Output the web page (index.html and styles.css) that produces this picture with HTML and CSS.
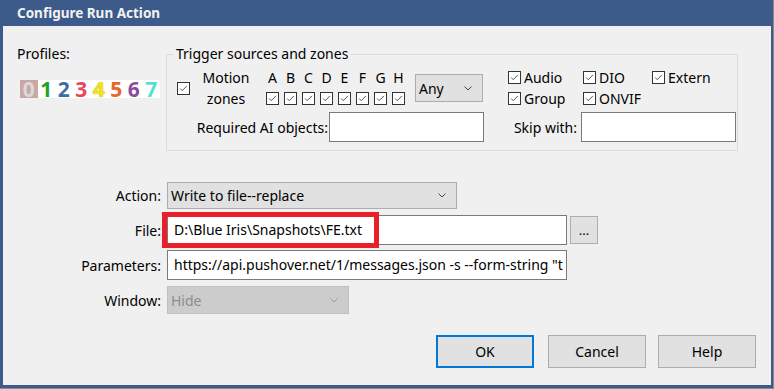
FILE: index.html
```html
<!DOCTYPE html>
<html lang="en">
<head>
    <meta charset="UTF-8">
    <title>Configure Run Action</title>
    <link rel="stylesheet" href="styles.css">
</head>
<body>
    <div class="window">
        <div class="titlebar">Configure Run Action</div>
        <div class="client">
            <div class="top">
                <div class="profiles">
                    <div class="profiles-label">Profiles:</div>
                    <div class="profile-strip">
                        <span class="p p0">0</span>
                        <span class="p p1">1</span>
                        <span class="p p2">2</span>
                        <span class="p p3">3</span>
                        <span class="p p4">4</span>
                        <span class="p p5">5</span>
                        <span class="p p6">6</span>
                        <span class="p p7">7</span>
                    </div>
                </div>

                <fieldset class="triggers">
                    <legend>Trigger sources and zones</legend>
                    <div class="trig-row">
                        <span class="cb"><svg viewBox="0 0 13 13"><polyline points="2.5,6.5 5,9 10.5,3.5"/></svg></span>
                        <div class="motion-label">Motion<br>zones</div>
                        <div class="zones">
                            <span class="zl">A</span><span class="zl">B</span><span class="zl">C</span><span class="zl">D</span>
                            <span class="zl">E</span><span class="zl">F</span><span class="zl">G</span><span class="zl">H</span>
                            <span class="cb"><svg viewBox="0 0 13 13"><polyline points="2.5,6.5 5,9 10.5,3.5"/></svg></span>
                            <span class="cb"><svg viewBox="0 0 13 13"><polyline points="2.5,6.5 5,9 10.5,3.5"/></svg></span>
                            <span class="cb"><svg viewBox="0 0 13 13"><polyline points="2.5,6.5 5,9 10.5,3.5"/></svg></span>
                            <span class="cb"><svg viewBox="0 0 13 13"><polyline points="2.5,6.5 5,9 10.5,3.5"/></svg></span>
                            <span class="cb"><svg viewBox="0 0 13 13"><polyline points="2.5,6.5 5,9 10.5,3.5"/></svg></span>
                            <span class="cb"><svg viewBox="0 0 13 13"><polyline points="2.5,6.5 5,9 10.5,3.5"/></svg></span>
                            <span class="cb"><svg viewBox="0 0 13 13"><polyline points="2.5,6.5 5,9 10.5,3.5"/></svg></span>
                            <span class="cb"><svg viewBox="0 0 13 13"><polyline points="2.5,6.5 5,9 10.5,3.5"/></svg></span>
                        </div>
                        <div class="select any">
                            <span>Any</span>
                            <svg class="chev" viewBox="0 0 8 5"><polyline points="0.5,0.5 4,4 7.5,0.5"/></svg>
                        </div>
                        <div class="sources">
                            <div class="src"><span class="cb"><svg viewBox="0 0 13 13"><polyline points="2.5,6.5 5,9 10.5,3.5"/></svg></span>Audio</div>
                            <div class="src"><span class="cb"><svg viewBox="0 0 13 13"><polyline points="2.5,6.5 5,9 10.5,3.5"/></svg></span>DIO</div>
                            <div class="src"><span class="cb"><svg viewBox="0 0 13 13"><polyline points="2.5,6.5 5,9 10.5,3.5"/></svg></span>Extern</div>
                            <div class="src"><span class="cb"><svg viewBox="0 0 13 13"><polyline points="2.5,6.5 5,9 10.5,3.5"/></svg></span>Group</div>
                            <div class="src"><span class="cb"><svg viewBox="0 0 13 13"><polyline points="2.5,6.5 5,9 10.5,3.5"/></svg></span>ONVIF</div>
                        </div>
                    </div>
                    <div class="trig-row2">
                        <label class="lbl ai-lbl">Required AI objects:</label>
                        <div class="input"></div>
                        <label class="lbl skip-lbl">Skip with:</label>
                        <div class="input"></div>
                    </div>
                </fieldset>
            </div>

            <div class="form">
                <label class="lbl">Action:</label>
                <div class="select action">
                    <span>Write to file--replace</span>
                    <svg class="chev" viewBox="0 0 8 5"><polyline points="0.5,0.5 4,4 7.5,0.5"/></svg>
                </div>

                <label class="lbl">File:</label>
                <div class="file-row">
                    <div class="file-wrap">
                        <div class="input wide">D:\Blue Iris\Snapshots\FE.txt</div>
                        <div class="highlight"></div>
                    </div>
                    <div class="btn browse">...</div>
                </div>

                <label class="lbl">Parameters:</label>
                <div class="input wide">https://api.pushover.net/1/messages.json -s --form-string "t</div>

                <label class="lbl">Window:</label>
                <div class="select window-sel disabled">
                    <span>Hide</span>
                    <svg class="chev" viewBox="0 0 8 5"><polyline points="0.5,0.5 4,4 7.5,0.5"/></svg>
                </div>
            </div>

            <div class="buttons">
                <div class="btn ok">OK</div>
                <div class="btn cancel">Cancel</div>
                <div class="btn help">Help</div>
            </div>
        </div>
    </div>
</body>
</html>
```

FILE: styles.css
```css
body {
    margin: 0;
    background: #8a8a8a;
    font-family: "Noto Sans", "Open Sans", sans-serif;
    font-size: 14px;
    color: #000;
}
.window {
    width: 773px;
    height: 388px;
    box-sizing: border-box;
    border: 3px solid #3c5a8a;
    border-top: 0;
    border-right-width: 2px;
    background: #f0f0f0;
    display: flex;
    flex-direction: column;
}
.titlebar {
    height: 26px;
    line-height: 26px;
    background: #3c5a8a;
    color: #f2f2f2;
    font-weight: bold;
    font-size: 13.5px;
    padding-left: 14px;
}
.client {
    flex: 1;
    padding: 0 15px 0 14px;
}

/* top area */
.top {
    display: flex;
    margin-top: 18px;
}
.profiles {
    width: 149px;
    flex: none;
}
.profiles-label {
    line-height: 20px;
}
.profile-strip {
    display: flex;
    margin: 16px 0 0 3px;
    width: 140px;
    height: 18px;
    background: #fff;
}
.p {
    width: 17.5px;
    text-align: center;
    font-weight: bold;
    font-size: 21px;
    line-height: 18px;
}
.p0 { background: #c9a7a7; color: #d9d9d9; }
.p1 { color: #27a027; }
.p2 { color: #3d6da6; }
.p3 { color: #e6495d; }
.p4 { color: #f3e41e; text-shadow: 0 0 1px #9a8d00; }
.p5 { color: #e8672a; }
.p6 { color: #8c4b9e; }
.p7 { color: #4fe1d5; }

.triggers {
    margin: 0;
    padding: 4px 1px 8px 10px;
    width: 572px;
    box-sizing: border-box;
    border: 1px solid #dcdcdc;
    min-width: 0;
}
.triggers legend {
    padding: 0 3px;
    margin-left: -4px;
    line-height: 20px;
}

/* checkbox */
.cb {
    width: 13px;
    height: 13px;
    box-sizing: border-box;
    border: 1px solid #333;
    background: #fff;
    flex: none;
    display: block;
}
.cb svg {
    display: block;
    width: 11px;
    height: 11px;
    fill: none;
    stroke: #333;
    stroke-width: 1;
}

.trig-row {
    display: flex;
    align-items: center;
    height: 40px;
}
.motion-label {
    margin-left: 11px;
    width: 50px;
    text-align: center;
    line-height: 21px;
}
.zones {
    margin-left: 15px;
    display: grid;
    grid-template-columns: repeat(8, 13px);
    grid-template-rows: 20px 13px;
    column-gap: 5px;
    row-gap: 4px;
    align-self: flex-start;
}
.zl {
    text-align: center;
    line-height: 20px;
}
.select {
    display: flex;
    align-items: center;
    justify-content: space-between;
    box-sizing: border-box;
    background: #e1e1e1;
    border: 1px solid #adadad;
    padding: 0 10px 0 3px;
}
.chev {
    width: 8px;
    height: 5px;
    fill: none;
    stroke: #444;
    stroke-width: 1;
}
.any {
    margin-left: 10px;
    width: 68px;
    height: 28px;
}
.sources {
    margin-left: 25px;
    display: grid;
    grid-template-columns: 75px 69px auto;
    grid-auto-rows: 21px;
    align-self: flex-start;
    margin-top: -1px;
}
.src {
    display: flex;
    align-items: center;
    gap: 3px;
}

.trig-row2 {
    display: grid;
    grid-template-columns: 1fr 155px 97px 155px;
    height: 30px;
    margin-top: 4px;
}
.lbl {
    align-self: center;
    text-align: right;
}
.ai-lbl { padding-right: 1px; }
.skip-lbl { padding-right: 4px; }
.input {
    box-sizing: border-box;
    height: 30px;
    background: #fff;
    border: 1px solid #7a7a7a;
    padding: 0 6px;
    line-height: 28px;
    white-space: nowrap;
    overflow: hidden;
}

/* lower form */
.form {
    display: grid;
    grid-template-columns: 144px auto;
    column-gap: 6px;
    row-gap: 5px;
    grid-auto-rows: 30px;
    align-items: center;
    margin-top: 29px;
}
.action {
    width: 290px;
    height: 27px;
}
.file-row {
    display: flex;
    align-items: center;
}
.file-wrap {
    position: relative;
}
.wide {
    width: 400px;
}
.highlight {
    position: absolute;
    left: -5px;
    top: -3px;
    width: 217px;
    height: 36px;
    box-sizing: border-box;
    border: 5px solid #e8202a;
}
.btn {
    box-sizing: border-box;
    background: #e1e1e1;
    border: 1px solid #adadad;
    display: flex;
    align-items: center;
    justify-content: center;
}
.browse {
    margin-left: 3px;
    width: 28px;
    height: 28px;
    font-size: 13px;
}
.window-sel {
    width: 182px;
    height: 28px;
}
.disabled {
    background: #cccccc;
    border-color: #bfbfbf;
    color: #8d8d8d;
}
.disabled .chev {
    stroke: #9a9a9a;
}

.buttons {
    display: flex;
    justify-content: flex-end;
    margin-top: 20px;
}
.buttons .btn {
    width: 98px;
    height: 33px;
}
.ok {
    border: 2px solid #0078d7;
}
.cancel {
    margin-left: 14px;
}
.help {
    margin-left: 12px;
}
```
